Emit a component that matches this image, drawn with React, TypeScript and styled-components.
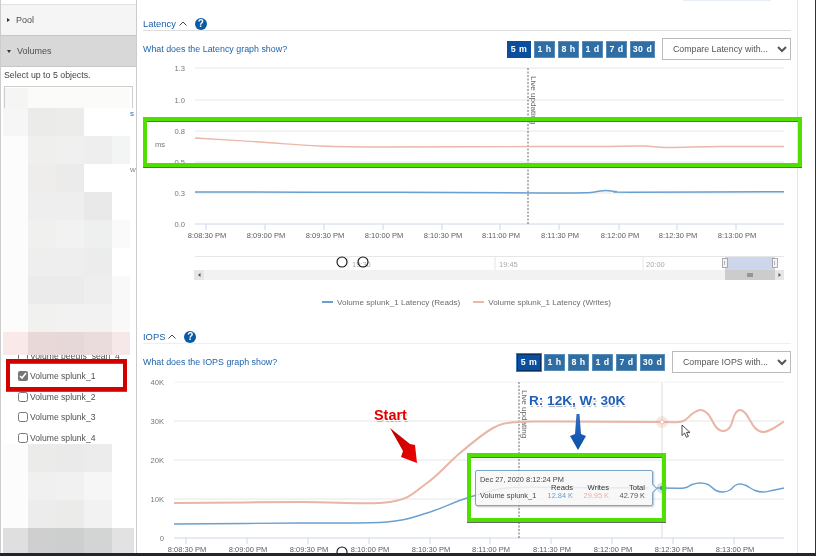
import React from "react";
import styled, { createGlobalStyle } from "styled-components";

type Point = [number, number];

const GlobalStyle = createGlobalStyle`
  html, body {
    margin: 0;
    padding: 0;
    background: #fff;
    overflow: hidden;
  }
  * {
    box-sizing: border-box;
  }
`;

// catmull-rom through the sampled points, good enough for the highcharts splines
const smooth = (pts: Point[]): string => {
  let d = `M${pts[0][0]} ${pts[0][1]}`;
  for (let i = 0; i < pts.length - 1; i++) {
    const p0 = pts[i - 1] || pts[i];
    const p1 = pts[i];
    const p2 = pts[i + 1];
    const p3 = pts[i + 2] || p2;
    const c1x = p1[0] + (p2[0] - p0[0]) / 6;
    const c1y = p1[1] + (p2[1] - p0[1]) / 6;
    const c2x = p2[0] - (p3[0] - p1[0]) / 6;
    const c2y = p2[1] - (p3[1] - p1[1]) / 6;
    d += ` C${c1x} ${c1y} ${c2x} ${c2y} ${p2[0]} ${p2[1]}`;
  }
  return d;
};

const RANGES = [
  { label: "5 m", width: 24 },
  { label: "1 h", width: 21 },
  { label: "8 h", width: 21 },
  { label: "1 d", width: 21 },
  { label: "7 d", width: 21 },
  { label: "30 d", width: 25 },
];

const TICK_LABELS = [
  "8:08:30 PM",
  "8:09:00 PM",
  "8:09:30 PM",
  "8:10:00 PM",
  "8:10:30 PM",
  "8:11:00 PM",
  "8:11:30 PM",
  "8:12:00 PM",
  "8:12:30 PM",
  "8:13:00 PM",
];

const TOP_MOSAIC = [
  ["#f5f5f3", "#fbfbfa", "#fbfbfa", "#fbfbfa", "#fbfbfa"],
  ["#f6f6f6", "#ebebe9", "#ececea", "#ffffff", "#ffffff"],
  ["#fcfcfc", "#efefee", "#f0f0f0", "#eeeeee", "#f3f4f4"],
  ["#fcfcfc", "#eeedec", "#ebebeb", "#ffffff", "#ffffff"],
  ["#fcfcfc", "#eeeeee", "#eeeeee", "#e9e9e9", "#ffffff"],
  ["#fcfcfc", "#f0f1ef", "#f1f2f1", "#eeefef", "#fafafa"],
  ["#fcfcfc", "#eeeeee", "#eeeeee", "#ececec", "#ffffff"],
  ["#fcfcfc", "#ebebeb", "#ebebeb", "#eeeeee", "#f9f9f9"],
  ["#fcfcfc", "#f1f1f0", "#f2f2f2", "#f2f2f2", "#f9f9f9"],
  ["#fae9e9", "#e8d8d8", "#e6d8d8", "#eadcdc", "#f6e8e8"],
];

const BOTTOM_MOSAIC = [
  ["#fcfcfc", "#ebebe9", "#eaeaea", "#ececec", "#ffffff"],
  ["#fcfcfc", "#f0f0f0", "#f1f1f1", "#f5f6f5", "#ffffff"],
  ["#fcfcfc", "#ececec", "#ebebe9", "#f2f2f2", "#ffffff"],
  ["#dfdfdf", "#cfcfcf", "#cdcfce", "#d3d5d4", "#e2e2e2"],
];

const Page = styled.div`
  position: relative;
  width: 816px;
  height: 556px;
  overflow: hidden;
  background: #fff;
  display: flex;
  flex-direction: column;
  font-family: "Liberation Sans", Arial, sans-serif;
  filter: blur(0.35px);
`;

const Body = styled.div`
  flex: 1;
  min-height: 0;
  display: flex;
  border-right: 1px solid #333;
`;

const BottomStrip = styled.div`
  flex: none;
  height: 3px;
  background: #20262b;
`;

const Sidebar = styled.aside`
  width: 137px;
  flex: none;
  display: flex;
  flex-direction: column;
  border-left: 1px solid #ccc;
  border-right: 1px solid #ccc;
  overflow: hidden;
`;

const SideTop = styled.div`
  flex: none;
  height: 5px;
  border-bottom: 1px solid #e2e2e2;
`;

const Accordion = styled.div<{ $open?: boolean }>`
  flex: none;
  height: 31px;
  display: flex;
  align-items: center;
  gap: 6px;
  padding-left: 6px;
  background: ${(p) => (p.$open ? "#d8d8d8" : "#f5f5f5")};
  border-bottom: 1px solid #c6c6c6;
  color: #505050;
  font-size: 9px;
`;

const Caret = styled.span<{ $open?: boolean }>`
  width: 0;
  height: 0;
  border-style: solid;
  border-color: transparent;
  ${(p) =>
    p.$open
      ? `border-width: 3px 2.5px 0 2.5px; border-top-color: #333;`
      : `border-width: 2.5px 0 2.5px 3px; border-left-color: #333;`}
`;

const Hint = styled.div`
  flex: none;
  height: 21px;
  padding: 3px 0 0 3px;
  color: #444;
  font-size: 8.8px;
  line-height: 11px;
`;

const ObjectList = styled.div`
  position: relative;
  flex: none;
  display: flex;
  flex-direction: column;
`;

const SearchBox = styled.div`
  position: absolute;
  top: -2px;
  left: 3px;
  width: 129px;
  height: 22px;
  border: 1px solid #ccc;
  border-bottom: none;
`;

const Speck = styled.span<{ $top: number; $color: string }>`
  position: absolute;
  top: ${(p) => p.$top}px;
  left: 129px;
  font-size: 8px;
  line-height: 9px;
  color: ${(p) => p.$color};
`;

const MosaicGrid = styled.div<{ $last: number; $row: number }>`
  flex: none;
  margin-left: 2px;
  display: grid;
  grid-template-columns: 25px 28px 28px 28px ${(p) => p.$last}px;
  grid-auto-rows: ${(p) => p.$row}px;
`;

const MosaicCell = styled.div<{ $bg: string }>`
  background: ${(p) => p.$bg};
`;

const ClippedRow = styled.div`
  flex: none;
  height: 11px;
  overflow: hidden;
  display: flex;
  align-items: flex-end;
`;

const Rows = styled.div`
  flex: none;
  height: 78px;
  overflow: hidden;
`;

const Row = styled.label`
  height: 20.5px;
  flex: none;
  display: flex;
  align-items: center;
  gap: 2px;
  padding-left: 17px;
  color: #505050;
  font-size: 8.6px;
`;

const Check = styled.input.attrs({ type: "checkbox", readOnly: true })`
  width: 10px;
  height: 10px;
  margin: 0;
  accent-color: #777;
`;

const Main = styled.main`
  flex: 1;
  min-width: 0;
  padding: 0 6px;
  border-right: 1px solid #e4e4e4;
  margin-right: 17px;
`;

const TopStub = styled.div`
  height: 1px;
  width: 88px;
  margin-left: 540px;
  background: #e8eef5;
`;

const SectionHeader = styled.h2<{ $height: number; $line: string }>`
  height: ${(p) => p.$height}px;
  margin: 0;
  display: flex;
  align-items: flex-end;
  gap: 5px;
  border-bottom: 1px solid ${(p) => p.$line};
  color: #1a5fa8;
  font-size: 9.4px;
  font-weight: 400;
  line-height: 13px;
`;

const TitleGroup = styled.span`
  display: flex;
  align-items: center;
  gap: 3px;
`;

const HelpIcon = styled.span`
  width: 12px;
  height: 12px;
  margin-left: 3px;
  border-radius: 50%;
  background: #0b5aa6;
  color: #fff;
  font-size: 10px;
  font-weight: 700;
  line-height: 12px;
  text-align: center;
`;

const Toolbar = styled.div<{ $bottom: number }>`
  height: 22px;
  margin-top: 7px;
  margin-bottom: ${(p) => p.$bottom}px;
  display: flex;
  align-items: center;
  gap: 7px;
`;

const HelpLink = styled.a`
  margin-right: auto;
  color: #1f63ad;
  font-size: 8.9px;
`;

const RangeGroup = styled.div`
  display: flex;
  gap: 3px;
`;

const RangeButton = styled.button<{ $width: number; $active?: boolean; $focus?: boolean }>`
  width: ${(p) => p.$width}px;
  height: 17px;
  padding: 0;
  border: 1px solid ${(p) => (p.$focus ? "#0a2f5e" : p.$active ? "#0a4f9e" : "#5a8cb8")};
  outline: ${(p) => (p.$focus ? "1px solid #3b7fc0" : "none")};
  background: ${(p) => (p.$active ? "#0a4f9e" : "#2f6ea5")};
  color: #fff;
  font-family: inherit;
  font-size: 8.8px;
  font-weight: 700;
  letter-spacing: 0.5px;
  line-height: 14px;
  white-space: nowrap;
`;

const CompareSelect = styled.select<{ $width: number }>`
  width: ${(p) => p.$width}px;
  height: 22px;
  padding: 0 0 0 6px;
  border: 1px solid #bbb;
  border-radius: 0;
  background: #fff;
  color: #555;
  font-family: inherit;
  font-size: 8.8px;
`;

const ChartSvg = styled.svg<{ $height: number }>`
  display: block;
  width: 648px;
  height: ${(p) => p.$height}px;

  text {
    font-family: "Liberation Sans", Arial, sans-serif;
    font-size: 7.5px;
    fill: #5c5c5c;
  }
  text.axis {
    font-size: 7.6px;
    fill: #777;
  }
  text.live {
    font-size: 8.1px;
    fill: #666;
  }
  text.nav {
    fill: #aaa;
  }
`;

const Legend = styled.div`
  height: 22px;
  padding-top: 2px;
  padding-left: 179px;
  display: flex;
  align-items: center;
  gap: 13px;
  color: #6c6c6c;
  font-size: 8.1px;
`;

const LegendItem = styled.span<{ $color: string }>`
  display: flex;
  align-items: center;
  gap: 4px;
  &::before {
    content: "";
    width: 11px;
    height: 2px;
    background: ${(p) => p.$color};
  }
`;

const HighlightBox = styled.div<{
  $x: number;
  $y: number;
  $w: number;
  $h: number;
  $color: string;
}>`
  position: absolute;
  left: ${(p) => p.$x}px;
  top: ${(p) => p.$y}px;
  width: ${(p) => p.$w}px;
  height: ${(p) => p.$h}px;
  border: 4px solid ${(p) => p.$color};
  box-shadow: 0 1px 0 #666, inset 0 1px 0 #666;
`;

const Callout = styled.div<{ $x: number; $y: number; $color: string; $size: number }>`
  position: absolute;
  left: ${(p) => p.$x}px;
  top: ${(p) => p.$y}px;
  color: ${(p) => p.$color};
  font-size: ${(p) => p.$size}px;
  font-weight: 700;
  line-height: 16px;
  white-space: nowrap;
  text-shadow: 1px 1px 0 #fff, -1px -1px 0 #fff, 1px -1px 0 #fff, -1px 1px 0 #fff,
    1px 2px 1px #aaa;
`;

const Tooltip = styled.div`
  position: absolute;
  left: 475px;
  top: 470px;
  width: 178px;
  height: 36px;
  padding: 5px 7px 0 4px;
  display: grid;
  grid-template-columns: 1fr 36px 36px 36px;
  grid-auto-rows: 8px;
  border: 1px solid #7ca5cc;
  border-radius: 2px;
  background: rgba(247, 247, 247, 0.86);
  box-shadow: 1px 1px 2px rgba(0, 0, 0, 0.25);
  color: #444;
  font-size: 7.4px;
  line-height: 8px;
  white-space: nowrap;

  &::after {
    content: "";
    position: absolute;
    right: -4px;
    top: 14px;
    width: 6px;
    height: 6px;
    background: #f7f7f7;
    border-top: 1px solid #7ca5cc;
    border-right: 1px solid #7ca5cc;
    transform: rotate(45deg);
  }
`;

const TooltipDate = styled.div`
  grid-column: 1 / -1;
`;

const TooltipHead = styled.div`
  text-align: right;
  color: #333;
  font-size: 7.6px;
`;

const TooltipValue = styled.div<{ $color?: string }>`
  text-align: right;
  color: ${(p) => p.$color || "#555"};
`;

const Plot: React.FC<{
  x0: number;
  x1: number;
  grid: { y: number; label: string; color?: string }[];
  axisY: number;
  labelX: number;
  ticks: number[];
  liveX: number;
  liveLabelY: number;
}> = ({ x0, x1, grid, axisY, labelX, ticks, liveX, liveLabelY }) => (
  <>
    {grid.map((g) => (
      <g key={g.label}>
        <line x1={x0} x2={x1} y1={g.y} y2={g.y} stroke={g.color || "#e6e6e6"} />
        <text className="axis" x={labelX} y={g.y + 3} textAnchor="end">
          {g.label}
        </text>
      </g>
    ))}
    {ticks.map((t) => (
      <line key={t} x1={t} x2={t} y1={axisY} y2={axisY + 6} stroke="#ccd6eb" />
    ))}
    {TICK_LABELS.map((l, i) => (
      <text key={l} x={ticks[i] + 1} y={axisY + 13.5} textAnchor="middle">
        {l}
      </text>
    ))}
    <line x1={liveX} x2={liveX} y1={grid[0].y} y2={axisY} stroke="#666" strokeDasharray="2 1.5" />
    <text
      className="live"
      transform={`translate(${liveX + 2.5} ${liveLabelY}) rotate(90)`}
    >
      Live updating
    </text>
  </>
);

const LATENCY_TICKS = [206, 265, 324, 383, 442, 500, 559, 619, 677, 736];
const IOPS_TICKS = [186, 247, 308, 369, 430, 490, 551, 612, 673, 734];

const LATENCY_GRID = [
  { y: 68, label: "1.3" },
  { y: 100, label: "1.0" },
  { y: 131, label: "0.8" },
  { y: 162, label: "0.5" },
  { y: 193, label: "0.3" },
  { y: 224, label: "0.0", color: "#ccd6eb" },
];

const IOPS_GRID = [
  { y: 382, label: "40K", color: "#f3f3f3" },
  { y: 421, label: "30K" },
  { y: 460, label: "20K" },
  { y: 499, label: "10K" },
  { y: 538, label: "0", color: "#ccd6eb" },
];

const LATENCY_WRITES: Point[] = [
  [195, 138],
  [260, 142],
  [320, 146],
  [390, 147],
  [540, 146.5],
  [600, 146.5],
  [643, 146],
  [667, 147.5],
  [720, 146.5],
  [784, 146.5],
];

const LATENCY_READS: Point[] = [
  [195, 192],
  [400, 192.3],
  [540, 193],
  [585, 192.8],
  [597, 191.6],
  [606, 190.4],
  [616, 191.6],
  [630, 192.2],
  [784, 191.8],
];

const IOPS_WRITES: Point[] = [
  [174, 503],
  [300, 502],
  [390, 502],
  [427, 483],
  [460, 453],
  [493, 428],
  [517, 422],
  [560, 421.6],
  [660, 422],
  [682, 421.5],
  [692, 414],
  [700, 410],
  [708, 414],
  [716, 427],
  [723, 431],
  [730, 427],
  [735, 414],
  [740, 410],
  [746, 414],
  [755, 428],
  [763, 432],
  [772, 429],
  [784, 421.5],
];

const IOPS_READS: Point[] = [
  [174, 524],
  [300, 523],
  [387, 522],
  [427, 513],
  [467, 498],
  [507, 488],
  [560, 487.5],
  [662, 488],
  [684, 488],
  [692, 484.5],
  [700, 483],
  [708, 484.5],
  [716, 490.5],
  [723, 492],
  [730, 490],
  [735, 485.5],
  [740, 484],
  [746, 485.5],
  [755, 490.5],
  [763, 492],
  [772, 490.5],
  [784, 488],
];

const Navigator: React.FC = () => (
  <g>
    <line x1={195} x2={784} y1={256.5} y2={256.5} stroke="#e6e6e6" />
    {[348, 495, 643].map((x) => (
      <line key={x} x1={x} x2={x} y1={257} y2={270} stroke="#e6e6e6" />
    ))}
    <text className="nav" x={352} y={267}>
      19:30
    </text>
    <text className="nav" x={499} y={267}>
      19:45
    </text>
    <text className="nav" x={646} y={267}>
      20:00
    </text>
    <rect x={725} y={257} width={50} height={13} fill="#cdd6ea" />
    <rect x={194} y={270} width={590} height={10} fill="#f2f2f2" />
    <rect x={194} y={270} width={10} height={10} fill="#e6e6e6" />
    <path d="M200.5 273 v4 l-2.5 -2 z" fill="#555" />
    <rect x={725} y={270} width={50} height={10} fill="#ccc" />
    <path d="M748 273 v4 M750 273 v4 M752 273 v4" stroke="#444" strokeWidth={0.8} />
    <rect x={775} y={270} width={9} height={10} fill="#e6e6e6" />
    <path d="M778.5 273 v4 l2.5 -2 z" fill="#555" />
    {[722.5, 772.5].map((x) => (
      <g key={x}>
        <rect x={x} y={258.5} width={5} height={9} fill="#f4f4f4" stroke="#999" strokeWidth={0.8} />
        <path d={`M${x + 2} 261 v4`} stroke="#999" strokeWidth={0.7} />
      </g>
    ))}
    <circle cx={342} cy={262} r={5} fill="none" stroke="#111" strokeWidth={1.1} />
    <circle cx={363} cy={262} r={5} fill="none" stroke="#111" strokeWidth={1.1} />
  </g>
);

const LatencyChart: React.FC = () => (
  <ChartSvg $height={228} viewBox="143 62 648 228">
    <Plot
      x0={195}
      x1={784}
      grid={LATENCY_GRID}
      axisY={224}
      labelX={185}
      ticks={LATENCY_TICKS}
      liveX={528}
      liveLabelY={76}
    />
    <text className="axis" x={155} y={147}>
      ms
    </text>
    <path d={smooth(LATENCY_WRITES)} fill="none" stroke="#ebb7a8" strokeWidth={1.4} />
    <path d={smooth(LATENCY_READS)} fill="none" stroke="#6a9fd0" strokeWidth={1.5} />
    <Navigator />
  </ChartSvg>
);

const IopsChart: React.FC = () => (
  <ChartSvg $height={177} viewBox="143 376 648 177">
    <line x1={662} x2={662} y1={382} y2={538} stroke="#e8e8e8" strokeWidth={1.5} />
    <Plot
      x0={174}
      x1={784}
      grid={IOPS_GRID}
      axisY={538}
      labelX={164}
      ticks={IOPS_TICKS}
      liveX={519}
      liveLabelY={390}
    />
    <path d={smooth(IOPS_WRITES)} fill="none" stroke="#e9b5a5" strokeWidth={2} />
    <path d={smooth(IOPS_READS)} fill="none" stroke="#6aa0d0" strokeWidth={1.4} />
    <circle cx={662} cy={422} r={6} fill="#e9b09f" fillOpacity={0.3} />
    <circle cx={662} cy={422} r={2} fill="#fff" stroke="#e9b09f" strokeWidth={0.8} />
    <circle cx={662} cy={488} r={5.5} fill="#7ca5cc" fillOpacity={0.3} />
    <circle cx={662} cy={488} r={2.2} fill="#4f8cc4" />
    <path
      d="M682 425 v10.5 l2.6 -2.4 l1.8 4.2 l2 -0.9 l-1.8 -4 h3.4 z"
      fill="#fff"
      stroke="#222"
      strokeWidth={0.8}
    />
    <circle cx={342} cy={552} r={5} fill="none" stroke="#111" strokeWidth={1.1} />
  </ChartSvg>
);

const Annotations = styled.svg`
  position: absolute;
  left: 0;
  top: 0;
  width: 816px;
  height: 556px;
  pointer-events: none;
`;

const ChevronUp: React.FC = () => (
  <svg width="8" height="5" viewBox="0 0 8 5">
    <path d="M0.5 4.5 L4 1 L7.5 4.5" fill="none" stroke="#444" strokeWidth="1" />
  </svg>
);

const Section: React.FC<{
  title: string;
  height: number;
  line: string;
  toolbarBottom: number;
  selectWidth: number;
  focusFirst?: boolean;
}> = ({ title, height, line, toolbarBottom, selectWidth, focusFirst }) => (
  <>
    <SectionHeader $height={height} $line={line}>
      <TitleGroup>
        {title} <ChevronUp />
      </TitleGroup>
      <HelpIcon>?</HelpIcon>
    </SectionHeader>
    <Toolbar $bottom={toolbarBottom}>
      <HelpLink>What does the {title} graph show?</HelpLink>
      <RangeGroup>
        {RANGES.map((r, i) => (
          <RangeButton
            key={r.label}
            $width={r.width}
            $active={i === 0}
            $focus={focusFirst && i === 0}
          >
            {r.label}
          </RangeButton>
        ))}
      </RangeGroup>
      <CompareSelect $width={selectWidth} defaultValue="none">
        <option value="none">Compare {title} with...</option>
      </CompareSelect>
    </Toolbar>
  </>
);

const Mosaic: React.FC<{ rows: string[][]; last: number; row: number }> = ({
  rows,
  last,
  row,
}) => (
  <MosaicGrid $last={last} $row={row}>
    {rows.flatMap((cells, r) =>
      cells.map((bg, c) => <MosaicCell key={`${r}-${c}`} $bg={bg} />)
    )}
  </MosaicGrid>
);

const App: React.FC = () => (
  <Page>
    <GlobalStyle />
    <Body>
      <Sidebar>
        <SideTop />
        <Accordion>
          <Caret />
          Pool
        </Accordion>
        <Accordion $open>
          <Caret $open />
          Volumes
        </Accordion>
        <Hint>Select up to 5 objects.</Hint>
        <ObjectList>
          <SearchBox />
          <Speck $top={21} $color="#2a6fc0">
            s
          </Speck>
          <Speck $top={77} $color="#888">
            w
          </Speck>
          <Mosaic rows={TOP_MOSAIC.slice(0, 1)} last={18} row={20} />
          <Mosaic rows={TOP_MOSAIC.slice(1, 9)} last={18} row={28} />
          <Mosaic rows={TOP_MOSAIC.slice(9)} last={18} row={23} />
          <ClippedRow>
            <Row>
              <Check />
              Volume beegfs_sean_4
            </Row>
          </ClippedRow>
          <Rows>
            <Row>
              <Check checked />
              Volume splunk_1
            </Row>
            <Row>
              <Check />
              Volume splunk_2
            </Row>
            <Row>
              <Check />
              Volume splunk_3
            </Row>
            <Row>
              <Check />
              Volume splunk_4
            </Row>
          </Rows>
          <Mosaic rows={BOTTOM_MOSAIC.slice(0, 3)} last={18} row={28} />
          <Mosaic rows={BOTTOM_MOSAIC.slice(3)} last={22} row={28} />
        </ObjectList>
      </Sidebar>
      <Main>
        <TopStub />
        <Section title="Latency" height={30} line="#ddd" toolbarBottom={2} selectWidth={129} />
        <LatencyChart />
        <Legend>
          <LegendItem $color="#6a9fd0">Volume splunk_1 Latency (Reads)</LegendItem>
          <LegendItem $color="#ebb7a8">Volume splunk_1 Latency (Writes)</LegendItem>
        </Legend>
        <Section
          title="IOPS"
          height={32}
          line="#efefef"
          toolbarBottom={3}
          selectWidth={119}
          focusFirst
        />
        <IopsChart />
      </Main>
    </Body>
    <BottomStrip />

    <Annotations viewBox="0 0 816 556">
      <defs>
        <linearGradient id="redArrow" x1="0" y1="0" x2="1" y2="1">
          <stop offset="0" stopColor="#b80000" />
          <stop offset="1" stopColor="#f00000" />
        </linearGradient>
        <linearGradient id="blueArrow" x1="0" y1="0" x2="0" y2="1">
          <stop offset="0" stopColor="#2f6fc4" />
          <stop offset="1" stopColor="#0c4ea6" />
        </linearGradient>
      </defs>
      <path
        d="M390 428 L410 444 L415 445 L417 463 L401 457 L403 451 Z"
        fill="url(#redArrow)"
      />
      <path
        d="M576.5 414 L579.5 414 L581 434 L586 436 L578 450 L570 436 L575 434 Z"
        fill="url(#blueArrow)"
      />
    </Annotations>

    <Tooltip>
      <TooltipDate>Dec 27, 2020 8:12:24 PM</TooltipDate>
      <div />
      <TooltipHead>Reads</TooltipHead>
      <TooltipHead>Writes</TooltipHead>
      <TooltipHead>Total</TooltipHead>
      <div>Volume splunk_1</div>
      <TooltipValue $color="#6a9fd0">12.84 K</TooltipValue>
      <TooltipValue $color="#e9b0a5">29.95 K</TooltipValue>
      <TooltipValue>42.79 K</TooltipValue>
    </Tooltip>

    <Callout $x={374} $y={407} $color="#e00000" $size={14.4}>
      Start
    </Callout>
    <Callout $x={529} $y={393} $color="#1f5fb8" $size={13.6}>
      R: 12K, W: 30K
    </Callout>

    <HighlightBox $x={143} $y={117} $w={659} $h={50} $color="#4fe000" />
    <HighlightBox $x={467} $y={453} $w={199} $h={69} $color="#4fe000" />
    <HighlightBox $x={6} $y={359} $w={121} $h={32} $color="#d30000" />
  </Page>
);

export default App;
